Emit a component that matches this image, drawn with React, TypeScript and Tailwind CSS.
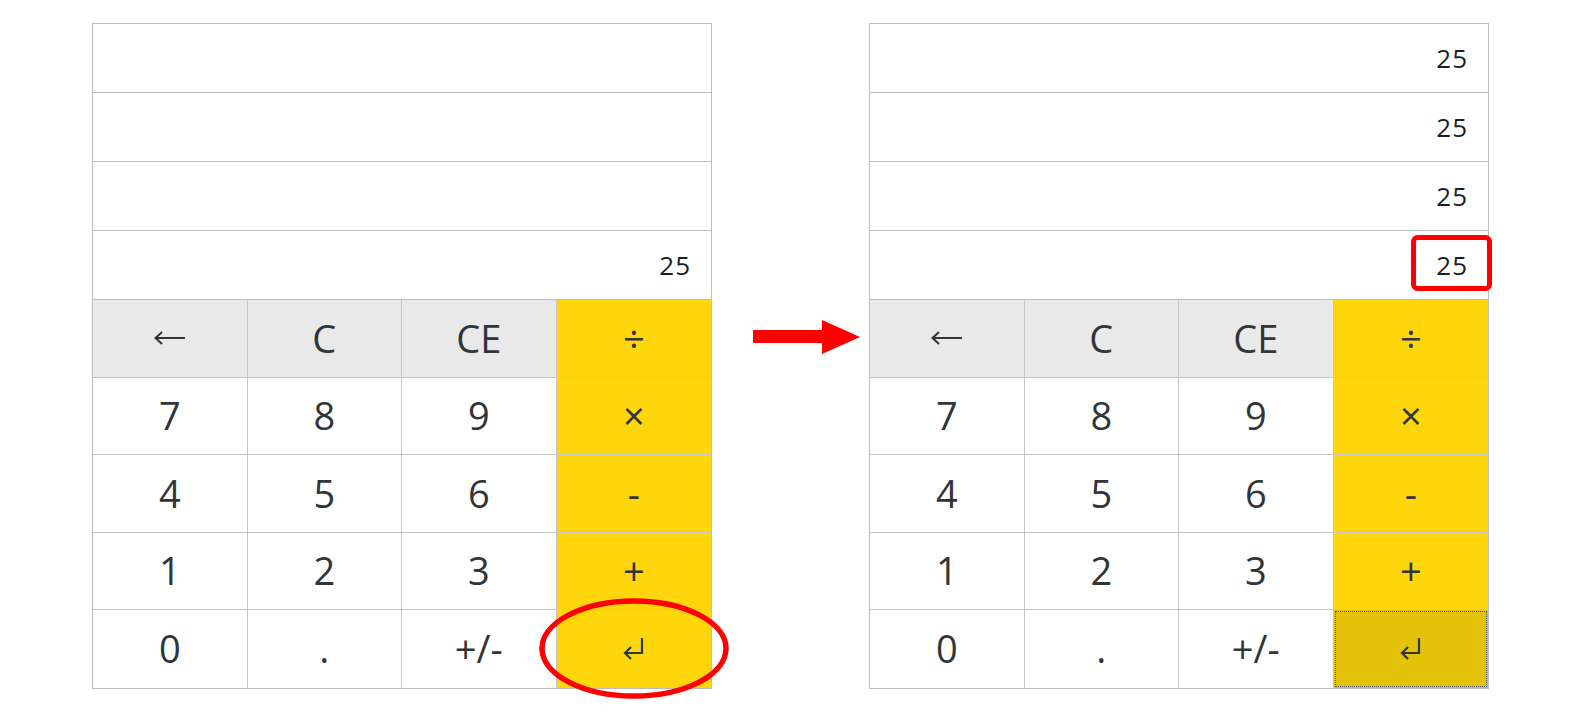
import React from "react";

type Key = { label: string; kind: "fn" | "num" | "op" };

const KEYS: Key[] = [
  { label: "←", kind: "fn" },
  { label: "C", kind: "fn" },
  { label: "CE", kind: "fn" },
  { label: "÷", kind: "op" },
  { label: "7", kind: "num" },
  { label: "8", kind: "num" },
  { label: "9", kind: "num" },
  { label: "×", kind: "op" },
  { label: "4", kind: "num" },
  { label: "5", kind: "num" },
  { label: "6", kind: "num" },
  { label: "-", kind: "op" },
  { label: "1", kind: "num" },
  { label: "2", kind: "num" },
  { label: "3", kind: "num" },
  { label: "+", kind: "op" },
  { label: "0", kind: "num" },
  { label: ".", kind: "num" },
  { label: "+/-", kind: "num" },
  { label: "↵", kind: "op" },
];

function Calculator({ lines, pressed }: { lines: string[]; pressed?: boolean }) {
  return (
    <div className="w-[620px] border border-[#bdbdbd] bg-white text-[#30353a] font-['Open_Sans',sans-serif]">
      {/* display */}
      {lines.map((line, i) => (
        <div
          key={i}
          className="h-[69px] border-b border-[#bdbdbd] flex items-center justify-end pr-[20px] text-[26px] tracking-[1px] text-[#1e1e1e]"
        >
          {line}
        </div>
      ))}
      {/* keypad */}
      <div className="grid grid-cols-4">
        {KEYS.map((k, i) => {
          const lastCol = i % 4 === 3;
          const lastRow = i >= 16;
          const isEnter = k.label === "↵";
          return (
            <div
              key={i}
              className={[
                "h-[77.5px] flex items-center justify-center text-[38px]",
                lastCol ? "" : "border-r border-[#c6c6c6]",
                lastRow ? "" : "border-b border-[#c6c6c6]",
                k.kind === "fn" ? "bg-[#e9e9e9]" : "",
                k.kind === "num" ? "bg-white" : "",
                k.kind === "op" && !(isEnter && pressed) ? "bg-[#ffd60b] text-[26px]" : "",
                isEnter && pressed
                  ? "bg-[#e5c20a] text-[26px] outline-1 outline-dotted outline-[#5a5a5a] outline-offset-[-2px]"
                  : "",
              ].join(" ")}
            >
              {k.label === "←" ? (
                <svg width="32" height="14" viewBox="0 0 32 14" fill="none" stroke="#30353a" strokeWidth="2">
                  <path d="M1 7 H31" />
                  <path d="M8 1 L1.5 7 L8 13" />
                </svg>
              ) : isEnter ? (
                <svg width="22" height="24" viewBox="0 0 22 24" fill="none" stroke="#30353a" strokeWidth="2.2">
                  <path d="M19 1 V16 H3" />
                  <path d="M8 10 L2 16 L8 22" />
                </svg>
              ) : (
                k.label
              )}
            </div>
          );
        })}
      </div>
    </div>
  );
}

export default function App() {
  return (
    <div className="w-[1580px] h-[716px] bg-white flex pl-[92px] pt-[23px]">
      <div className="relative">
        <Calculator lines={["", "", "", "25"]} />
        <svg className="absolute left-[447px] top-[575px]" width="190" height="101" viewBox="0 0 190 101">
          <ellipse cx="95" cy="50.5" rx="92" ry="47.5" fill="none" stroke="#ff0000" strokeWidth="5.5" />
        </svg>
      </div>

      <div className="w-[157px] pt-[297px] pl-[41px]">
        <svg width="108" height="34" viewBox="0 0 108 34">
          <polygon points="0,10 69,10 69,0 107,17 69,34 69,23 0,23" fill="#ff0000" />
        </svg>
      </div>

      <div className="relative">
        <Calculator lines={["25", "25", "25", "25"]} pressed />
        <svg className="absolute left-[542px] top-[212px]" width="81" height="56" viewBox="0 0 81 56">
          <rect x="2.5" y="2.5" width="76" height="51" rx="4" fill="none" stroke="#ff0000" strokeWidth="5" />
        </svg>
      </div>
    </div>
  );
}
